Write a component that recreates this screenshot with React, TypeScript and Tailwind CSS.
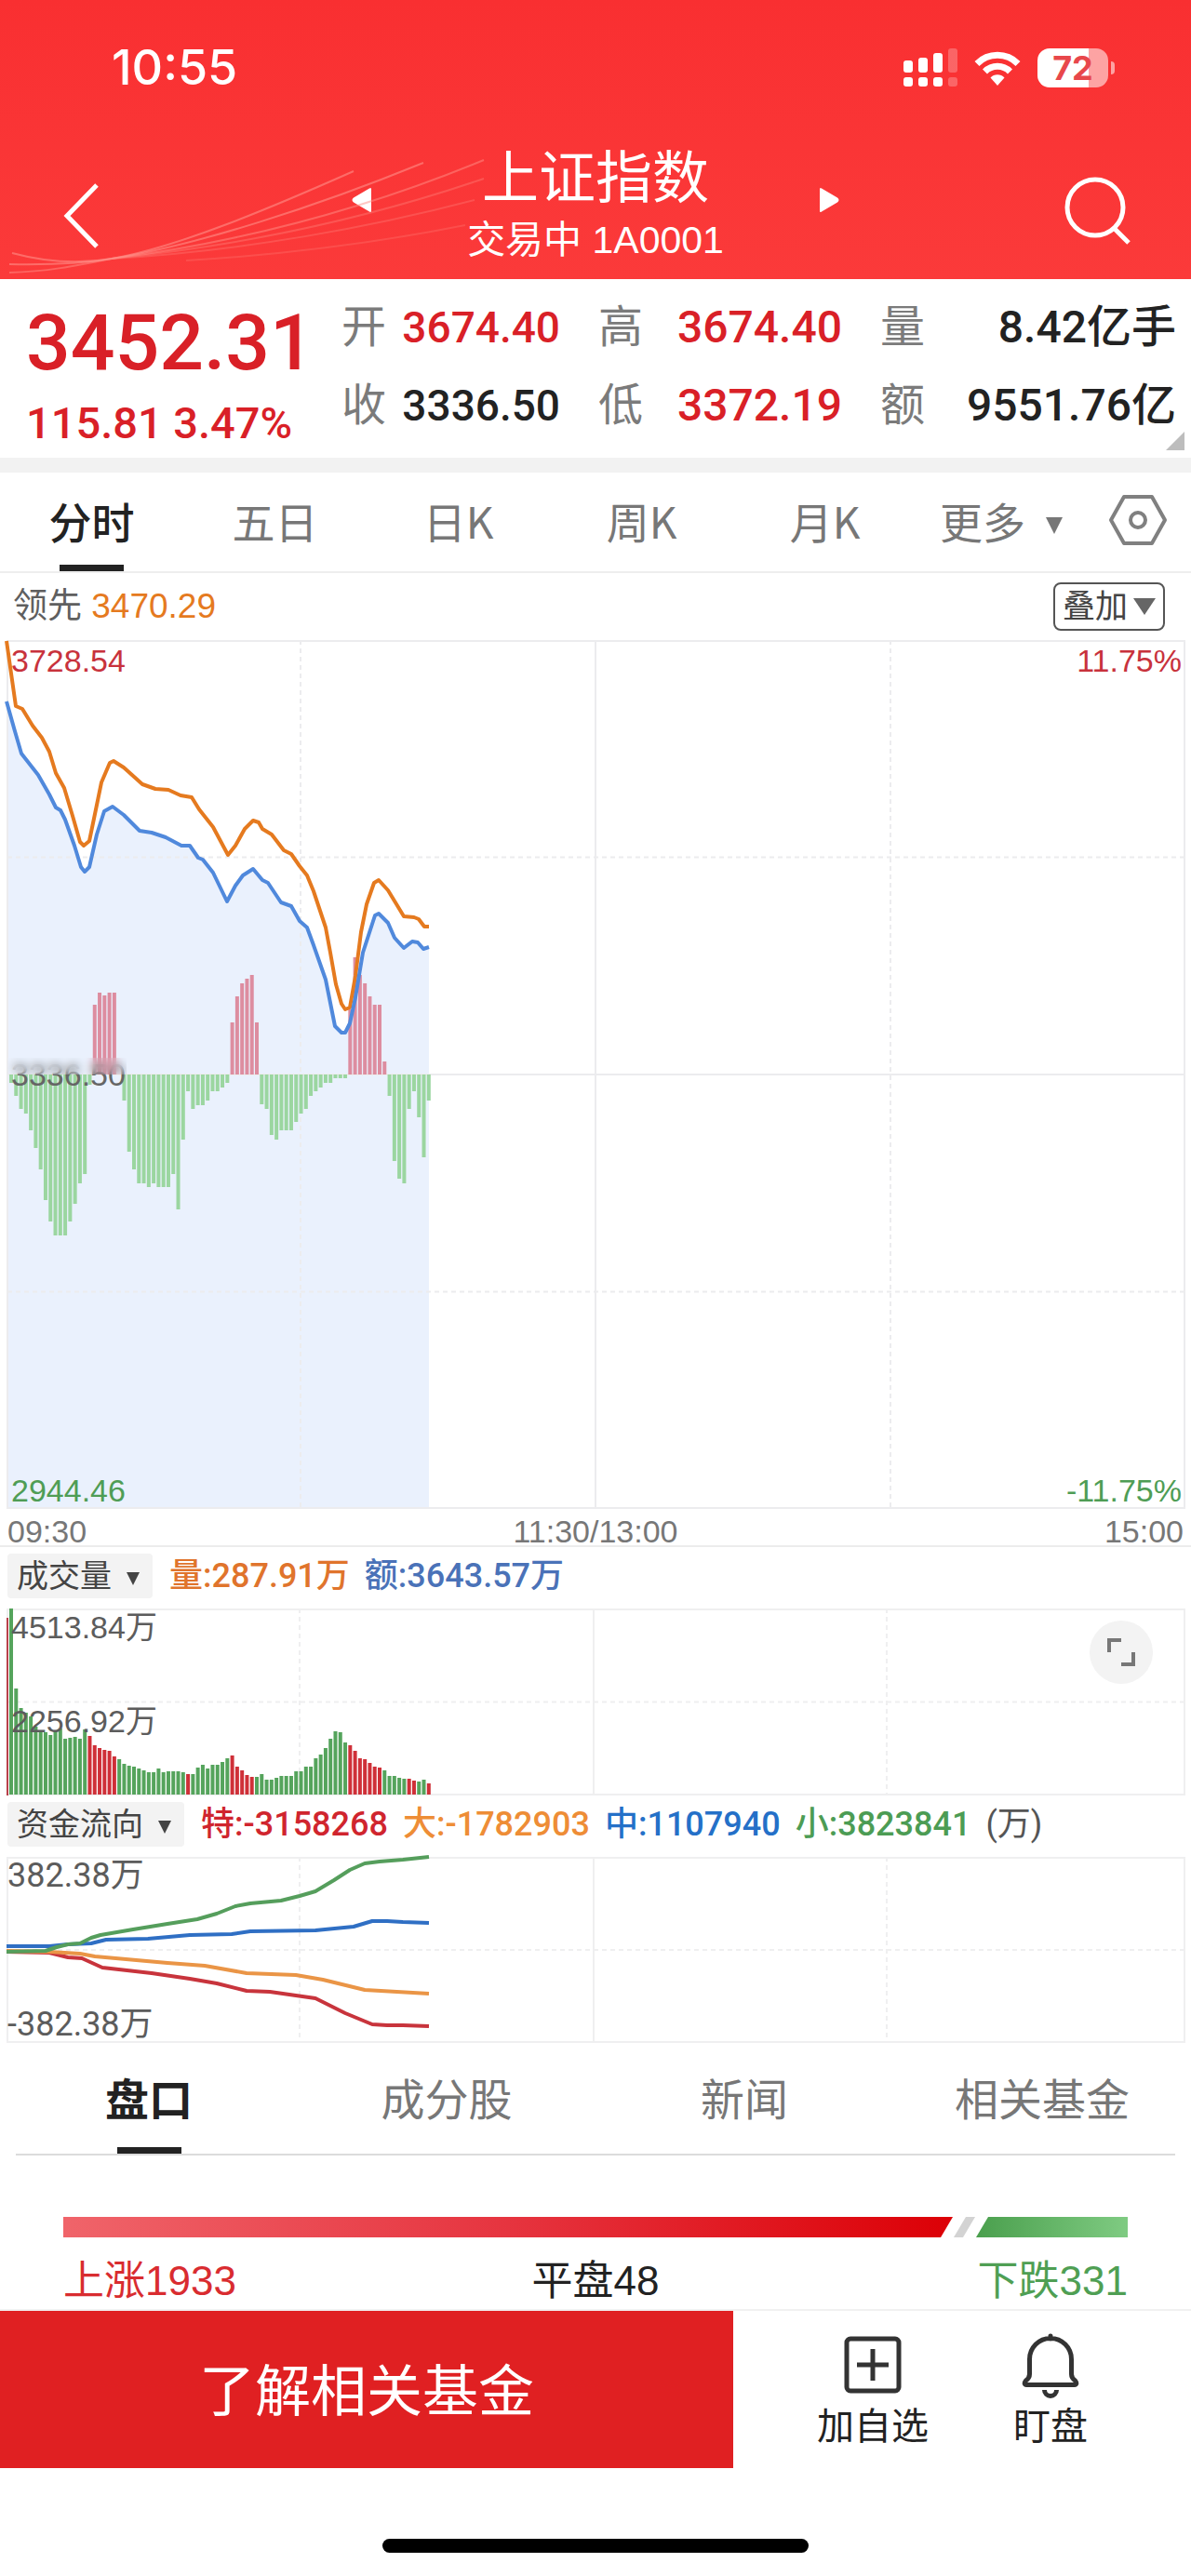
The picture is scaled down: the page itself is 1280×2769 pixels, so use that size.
import { ReactNode } from 'react';

// one bar per minute: positive goes up (red), negative goes down (green)
const momentum = [
  -9, -23, -37, -42, -60, -79, -102, -135, -158, -173, -173, -173, -158, -139, -117, -107, -11,
  75, 88, 85, 88, 88, 0,
  -28, -83, -102, -117, -117, -121, -117, -121, -121, -121, -107, -145, -70, -18, -37, -33, -33, -28, -18, -18, -14, -9,
  56, 84, 98, 103, 107, 56,
  -32, -37, -65, -70, -60, -60, -60, -51, -42, -37, -23, -18, -14, -9, -9, -4, -4, -4,
  70, 126, 107, 98, 84, 75, 75, 14,
  -23, -93, -112, -117, -37, -18, -46, -89, -28,
];

// positive: price rose in that minute, negative: it fell
const volume = [
  -200, -114, -93, -88, -84, -73, -69, -67, -64, -69, -71, -60, -61, -62, -60, -70,
  63, 53, 50, 48, 47, 41,
  -38, -33, -31, -30, -28, -26, -24, -24, -28, -24, -25, -25, -25, -24,
  22,
  -22, -29, -32, -28, -32, -32, -35, -39,
  42, 30, 26, 21, 19,
  -19, -22, -16, -16, -18, -20, -20, -20, -25, -25, -30, -30, -39, -43, -50, -60, -68, -67, -56,
  53, 47, 39, 38, 34, 30, 29,
  -26, -20, -20, -18, -17,
  17, 15, -14, -16, 12,
];

const leadLine =
  '7,1 12,36 17,71 24,74 35,92 45,105 53,120 60,143 69,159 78,189 86,217 90,221 96,216 102,187 109,153 118,132 122,130 133,137 153,155 167,160 181,161 194,167 206,169 214,182 229,201 245,231 253,221 263,203 272,194 278,196 282,203 292,209 305,226 313,230 322,243 330,253 337,270 350,309 355,336 361,370 367,391 371,397 376,395 382,361 388,314 394,284 402,261 407,258 417,269 434,297 445,298 450,300 456,308 461,308';
const priceLine =
  '7,66 16,98 23,122 41,145 53,166 60,180 65,183 70,193 80,221 87,244 91,249 96,244 104,209 112,184 121,179 133,188 150,205 163,207 178,212 195,221 204,221 213,234 218,236 229,250 244,281 253,264 261,253 272,246 282,258 288,261 302,282 313,286 322,302 330,309 337,328 350,365 360,415 367,422 371,422 376,412 382,384 390,336 403,296 407,294 417,304 424,320 434,331 443,324 449,325 455,332 461,330';

const flows = [
  { color: '#c8343c', points: '7,102 53,103 73,108 88,109 110,119 163,125 204,131 233,136 265,144 290,145 318,149 339,152 371,168 400,180 416,181 433,181 461,182' },
  { color: '#ea9546', points: '7,101 53,102 86,104 102,107 180,114 220,117 265,125 318,127 347,132 392,143 461,147' },
  { color: '#2f6fc4', points: '7,96 53,96 73,94 98,93 114,89 159,88 204,84 249,83 269,80 339,79 380,75 400,69 416,69 433,70 461,71' },
  { color: '#559e5c', points: '7,102 49,101 61,97 73,94 86,93 98,87 108,84 143,78 180,72 212,67 233,61 253,53 269,50 302,47 322,42 339,37 359,25 376,14 392,7 408,5 433,3 461,0' },
];

const periods = ['分时', '五日', '日K', '周K', '月K'];
const sections = ['盘口', '成分股', '新闻', '相关基金'];

const barX = (i: number) => 12 + i * 5.28;

function Caret({ className }: { className: string }) {
  return (
    <svg viewBox="0 0 16 16" className={className} fill="currentColor" preserveAspectRatio="none" aria-hidden="true">
      <path d="M0 0h16L8 16z" />
    </svg>
  );
}

function Grid({ height }: { height: number }) {
  return (
    <g stroke="#ececee" strokeWidth="2" fill="none">
      <path d={`M8 1H1273V${height - 1}H8z`} />
      <path d={`M640 0V${height}`} />
      <path d={`M323 0V${height}M957 0V${height}M8 ${height / 4}H1273M8 ${(height * 3) / 4}H1273`} strokeDasharray="5 4" />
      <path d={`M8 ${height / 2}H1273`} />
    </g>
  );
}

function SubGrid({ height }: { height: number }) {
  return (
    <g stroke="#efeff0" strokeWidth="2" fill="none">
      <path d={`M8 1H1273V${height - 1}H8z`} />
      <path d={`M638 0V${height}`} />
      <path d={`M322 0V${height}M953 0V${height}M8 ${height / 2}H1273`} strokeDasharray="5 4" />
    </g>
  );
}

function Indicator({ label, children }: { label: string; children: ReactNode }) {
  return (
    <div className="flex h-[66px] items-center gap-[18px] px-2 pb-1 text-[36px] leading-[48px] font-medium">
      <button className="flex h-12 items-center gap-[16px] rounded-sm bg-[#f3f3f3] pr-[14px] pl-[10px] text-[34px] font-normal text-[#444]">
        {label}
        <Caret className="mt-[6px] h-[14px] w-[14px]" />
      </button>
      <div className="flex gap-4">{children}</div>
    </div>
  );
}

function Pair({ label, value, tone, size }: { label: string; value: string; tone: string; size: string }) {
  return (
    <div className="flex justify-between leading-[84px]">
      <dt className="text-[48px] text-[#7b7b7b]">{label}</dt>
      <dd className={`font-medium ${size} ${tone}`}>{value}</dd>
    </div>
  );
}

export default function App() {
  return (
    <div className="min-h-screen bg-white font-['Liberation_Sans','Noto_Sans_CJK_SC',sans-serif] text-[#222]">
      {/* Header */}
      <header className="relative h-[300px] bg-linear-to-b from-[#f92f31] to-[#fb3a3a] text-white">
        <svg viewBox="0 0 560 140" className="absolute bottom-0 left-0 w-[560px]" fill="none" stroke="#ff8f88" strokeWidth="2" aria-hidden="true">
          <path d="M13 112C50 122 85 124 120 118C190 106 290 64 380 24" opacity=".6" />
          <path d="M10 124C60 125 90 123 120 118C210 104 340 62 455 15" opacity=".6" />
          <path d="M10 133C50 132 80 126 120 118C230 104 370 74 520 12" opacity=".5" />
          <path d="M120 118C240 106 380 80 520 32" opacity=".35" />
          <path d="M120 118C260 110 400 84 510 55" opacity=".3" />
          <path d="M200 120C300 114 400 102 500 82" opacity=".25" />
        </svg>
        <div className="flex h-[146px] items-center justify-between pr-[82px] pl-[120px]">
          <time className="font-['Inter',sans-serif] text-[52px] leading-[60px] font-medium">10:55</time>
          <div className="flex items-center gap-[18px]">
            <svg viewBox="0 0 58 42" className="h-[42px] w-[58px]" fill="currentColor" aria-hidden="true">
              <rect x="0" y="13" width="10" height="13" rx="3" />
              <rect x="16" y="10" width="10" height="16" rx="3" />
              <rect x="32" y="5" width="10" height="21" rx="3" />
              <rect x="48" y="0" width="10" height="26" rx="3" opacity=".25" />
              <rect x="0" y="31" width="10" height="10" rx="3" />
              <rect x="16" y="31" width="10" height="10" rx="3" />
              <rect x="32" y="31" width="10" height="10" rx="3" />
              <rect x="48" y="31" width="10" height="10" rx="3" opacity=".25" />
            </svg>
            <svg viewBox="0 0 50 38" className="h-[38px] w-[50px]" fill="none" stroke="currentColor" strokeWidth="7" aria-hidden="true">
              <path d="M3 14.500a31 31 0 0 1 44 0" />
              <path d="M11.500 23a19 19 0 0 1 27 0" />
              <path d="M25 38l-7.500-8.500a10.500 10.500 0 0 1 15 0z" fill="currentColor" stroke="none" />
            </svg>
            <div className="flex items-center gap-[3px]">
              <div className="flex h-[42px] w-[76px] items-center justify-center rounded-[13px] bg-linear-to-r from-white from-72% to-[#fda3a3] to-72% font-['Inter',sans-serif] text-[36px] leading-none font-bold text-[#e8474b]">
                72
              </div>
              <div className="h-[14px] w-[4px] rounded-r-full bg-[#fda3a3]" />
            </div>
          </div>
        </div>
        <nav className="flex h-[146px] items-center justify-between px-[62px]">
          <button aria-label="返回">
            <svg viewBox="0 0 76 96" className="h-[96px] w-[76px]" fill="none" stroke="currentColor" strokeWidth="5">
              <path d="M42 28L10 61l32 33" />
            </svg>
          </button>
          <div className="flex w-[524px] items-center justify-between">
            <button aria-label="上一个" className="pb-2">
              <svg viewBox="0 0 22 28" className="h-7 w-[22px]" fill="currentColor"><path d="M19 1.500q2-1.500 2 1v23q0 2.500-2 1L2 16.500q-3-2.500 0-5z" /></svg>
            </button>
            <div className="text-center">
              <h1 className="text-[61px] leading-[78px] font-normal">上证指数</h1>
              <p className="text-[41px] leading-[54px]">交易中 1A0001</p>
            </div>
            <button aria-label="下一个" className="pb-2">
              <svg viewBox="0 0 22 28" className="h-7 w-[22px]" fill="currentColor"><path d="M3 1.500q-2-1.500-2 1v23q0 2.500 2 1L20 16.500q3-2.500 0-5z" /></svg>
            </button>
          </div>
          <button aria-label="搜索">
            <svg viewBox="0 0 76 92" className="h-[92px] w-[76px]" fill="none" stroke="currentColor" strokeWidth="5">
              <circle cx="35" cy="50" r="30" />
              <path d="M55 72l16 16" />
            </svg>
          </button>
        </nav>
      </header>

      {/* Quote */}
      <section className="relative flex h-[192px] justify-between pr-4 pl-7 font-['Roboto','Noto_Sans_CJK_SC',sans-serif]">
        <div className="pt-5 font-medium text-[#d92027]">
          <div className="text-[84px] leading-[98px]">3452.31</div>
          <div className="text-[47px] leading-[74px]">115.81 3.47%</div>
        </div>
        <dl className="grid grid-cols-[235px_262px_318px] content-start gap-x-[41px] pt-[10px]">
          <Pair label="开" value="3674.40" tone="text-[#d92027]" size="text-[46px]" />
          <Pair label="高" value="3674.40" tone="text-[#d92027]" size="text-[48px]" />
          <Pair label="量" value="8.42亿手" tone="text-[#222]" size="text-[48px]" />
          <Pair label="收" value="3336.50" tone="text-[#222]" size="text-[46px]" />
          <Pair label="低" value="3372.19" tone="text-[#d92027]" size="text-[48px]" />
          <Pair label="额" value="9551.76亿" tone="text-[#222]" size="text-[48px]" />
        </dl>
        <svg viewBox="0 0 20 20" className="absolute right-[7px] bottom-2 h-5 w-5" fill="#bdbdbd" aria-hidden="true"><path d="M20 0v20H0z" /></svg>
      </section>
      <div className="h-4 bg-[#f2f2f2]" />

      {/* Period tabs */}
      <div className="flex h-[108px] border-b-2 border-[#eeeeee] font-['Noto_Sans_CJK_SC',sans-serif] text-[46px] text-[#777]">
        <div className="grid flex-1 grid-cols-6">
          {periods.map((p, i) => (
            <button key={p} className={`flex flex-col items-center justify-between pt-[18px] leading-[66px] ${i === 0 ? 'font-medium text-[#222]' : ''}`}>
              {p}
              {i === 0 && <span className="h-[7px] w-[69px] bg-[#222]" />}
            </button>
          ))}
          <button className="flex items-start justify-end gap-[22px] pt-[18px] pr-[40px] leading-[66px]">
            更多
            <Caret className="mt-[30px] h-[18px] w-[18px]" />
          </button>
        </div>
        <button aria-label="设置" className="w-[98px] pb-[4px] pl-[9px]">
          <svg viewBox="0 0 64 56" className="h-[56px] w-[64px]" fill="none" stroke="#808080" strokeWidth="4">
            <path d="M17 3h30l14 25-14 25H17L3 28z" strokeLinejoin="round" />
            <circle cx="32" cy="28" r="8" />
          </svg>
        </button>
      </div>

      {/* Intraday chart */}
      <div className="flex h-[72px] items-center justify-between pr-7 pl-[14px]">
        <p className="text-[37px] text-[#5f5f5f]">
          领先 <span className="text-[#e57a1f]">3470.29</span>
        </p>
        <button className="flex h-[52px] items-center gap-[6px] rounded-lg border-2 border-[#555] px-[8px] text-[35px] text-[#444]">
          叠加
          <Caret className="h-[18px] w-6 text-[#666]" />
        </button>
      </div>
      <section className="relative text-[34px] leading-10">
        <svg viewBox="0 0 1280 934" className="block w-full" role="img" aria-label="分时走势">
          <polygon points={`${priceLine} 461,933 8,933`} fill="#eaf1fd" />
          <Grid height={934} />
          {momentum.map((v, i) => (
            <rect key={i} x={barX(i) - 2} y={v > 0 ? 467 - v : 467} width="4" height={Math.abs(v)} fill={v > 0 ? '#dd8da0' : '#9bd6a0'} />
          ))}
          <polyline points={leadLine} fill="none" stroke="#e57a1f" strokeWidth="4" strokeLinejoin="round" />
          <polyline points={priceLine} fill="none" stroke="#5089dc" strokeWidth="4" strokeLinejoin="round" />
        </svg>
        <span className="absolute top-[2px] left-3 text-[#c8323c]">3728.54</span>
        <span className="absolute top-[2px] right-[10px] text-[#c8323c]">11.75%</span>
        <span className="absolute top-1/2 left-3 -translate-y-1/2 text-[#666]">3336.50</span>
        <span className="absolute top-1/2 left-2 h-[18px] w-[128px] -translate-y-full backdrop-blur-[5px]" />
        <span className="absolute bottom-0 left-3 text-[#4f9d55]">2944.46</span>
        <span className="absolute right-[10px] bottom-0 text-[#4f9d55]">-11.75%</span>
      </section>
      <div className="grid h-[41px] grid-cols-3 border-b-2 border-[#ececec] px-2 pt-[5px] text-[34px] leading-[38px] text-[#777]">
        <span>09:30</span>
        <span className="text-center">11:30/13:00</span>
        <span className="text-right">15:00</span>
      </div>

      {/* Volume */}
      <section className="font-['Roboto','Noto_Sans_CJK_SC',sans-serif]">
        <Indicator label="成交量">
          <span className="text-[#e0742c]">量:287.91万</span>
          <span className="text-[#4a72b8]">额:3643.57万</span>
        </Indicator>
        <div className="relative font-['Liberation_Sans','Noto_Sans_CJK_SC',sans-serif] text-[34px] leading-10 text-[#5c5c5c]">
          <svg viewBox="0 0 1280 201" className="block w-full" role="img" aria-label="成交量">
            <SubGrid height={201} />
            <rect x="7" y="10" width="2" height="191" fill="#b8404a" />
            {volume.map((v, i) => (
              <rect key={i} x={barX(i) - 2} y={200 - Math.abs(v)} width="4" height={Math.abs(v)} fill={v > 0 ? '#cf3038' : '#55a45c'} />
            ))}
          </svg>
          <span className="absolute top-0 left-3">4513.84万</span>
          <span className="absolute top-[101px] left-3">2256.92万</span>
          <button aria-label="全屏" className="absolute top-[13px] right-[41px] flex h-[68px] w-[68px] items-center justify-center rounded-full bg-[#f3f3f3]">
            <svg viewBox="0 0 32 32" className="h-8 w-8" fill="none" stroke="#777" strokeWidth="4">
              <path d="M3 16V3h13M29 16v13H16" />
            </svg>
          </button>
        </div>
      </section>

      {/* Money flow */}
      <section className="font-['Roboto','Noto_Sans_CJK_SC',sans-serif]">
        <Indicator label="资金流向">
          <span className="text-[#d0252e]">特:-3158268</span>
          <span className="text-[#ee8d36]">大:-1782903</span>
          <span className="text-[#2470c8]">中:1107940</span>
          <span className="text-[#4c9c54]">小:3823841</span>
          <span className="font-normal text-[#555]">(万)</span>
        </Indicator>
        <div className="relative text-[36px] leading-10 text-[#5c5c5c]">
          <svg viewBox="0 0 1280 200" className="block w-full overflow-visible" role="img" aria-label="资金流向">
            <SubGrid height={200} />
            {flows.map((f) => (
              <polyline key={f.color} points={f.points} fill="none" stroke={f.color} strokeWidth="4" strokeLinejoin="round" />
            ))}
          </svg>
          <span className="absolute top-0 left-2">382.38万</span>
          <span className="absolute bottom-0 left-2">-382.38万</span>
        </div>
      </section>

      {/* Section tabs */}
      <div className="relative grid h-[121px] grid-cols-4 font-['Noto_Sans_CJK_SC',sans-serif] text-[47px] text-[#777]">
        <div className="absolute inset-x-[17px] bottom-0 h-[2px] bg-[#dcdcdc]" />
        {sections.map((s, i) => (
          <button key={s} className={`flex flex-col items-center justify-between pt-[24px] pb-[2px] leading-[68px] ${i === 0 ? 'font-bold text-[#222]' : ''}`}>
            {s}
            {i === 0 && <span className="h-[7px] w-[69px] bg-[#222]" />}
          </button>
        ))}
      </div>

      {/* Advance / decline */}
      <section className="px-[68px] pt-[66px]">
        <svg viewBox="0 0 1144 22" className="block w-full" role="img" aria-label="涨跌分布">
          <defs>
            <linearGradient id="up">
              <stop offset="0" stopColor="#f0646a" />
              <stop offset=".5" stopColor="#e6343f" />
              <stop offset="1" stopColor="#dc0006" />
            </linearGradient>
            <linearGradient id="down">
              <stop offset="0" stopColor="#4a9f4d" />
              <stop offset="1" stopColor="#7fcb82" />
            </linearGradient>
          </defs>
          <path d="M0 0h956l-13 22H0z" fill="url(#up)" />
          <path d="M970 0h10l-13 22h-10z" fill="#d3d3d3" />
          <path d="M994 0h150v22H981z" fill="url(#down)" />
        </svg>
        <div className="grid h-[77px] grid-cols-3 pt-[17px] text-[44px] leading-[60px]">
          <span className="text-[#d92c30]">上涨1933</span>
          <span className="text-center">平盘48</span>
          <span className="text-right text-[#4f9f54]">下跌331</span>
        </div>
      </section>

      {/* Footer */}
      <footer className="flex h-[171px] border-t-2 border-[#f1f1f1] font-['Noto_Sans_CJK_SC',sans-serif]">
        <button className="w-[788px] bg-[#e02022] pb-[6px] text-[60px] leading-[80px] text-white">了解相关基金</button>
        <div className="flex flex-1 gap-[91px] pt-[23px] pl-[90px] text-[40px] leading-[52px] text-[#222]">
          <button className="flex flex-col items-center justify-start">
            <svg viewBox="0 0 64 72" className="h-[72px] w-16" fill="none" stroke="#333" strokeWidth="5">
              <rect x="4" y="7" width="56" height="56" rx="4" />
              <path d="M32 18v34M15 35h34" />
            </svg>
            加自选
          </button>
          <button className="flex flex-col items-center justify-start">
            <svg viewBox="0 0 64 72" className="h-[72px] w-16" fill="none" stroke="#333" strokeWidth="5" strokeLinejoin="round" strokeLinecap="round">
              <path d="M32 4v3M9.500 45V29a22.500 22.500 0 0 1 45 0v16q0 4 4 7 3 4-1 4.500H6.500q-4-.5-1-4.500 4-3 4-7z" />
              <path d="M25.500 62a6.500 6.500 0 0 0 13 0" strokeLinecap="butt" />
            </svg>
            盯盘
          </button>
        </div>
      </footer>
      <div className="mx-auto mt-[76px] mb-6 h-[15px] w-[458px] rounded-full bg-black" />
    </div>
  );
}
